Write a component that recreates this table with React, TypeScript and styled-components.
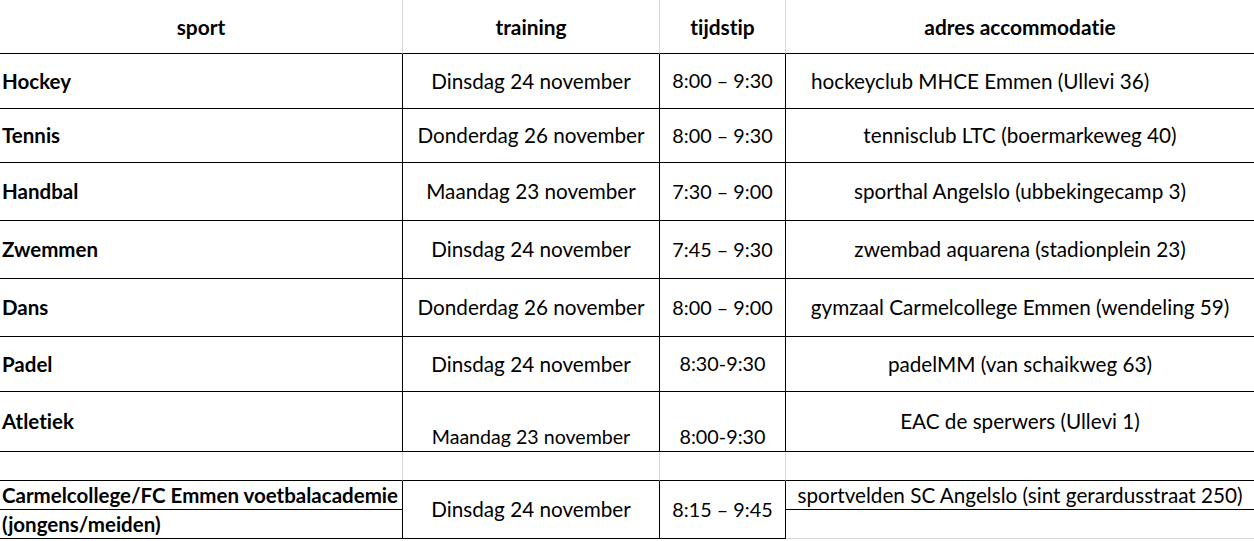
import React from "react";
import styled, { createGlobalStyle } from "styled-components";

const Global = createGlobalStyle`
  html, body { margin: 0; padding: 0; background: #ffffff; }
  body {
    font-family: "Lato", "Liberation Sans", sans-serif;
    color: #000;
    font-variant-ligatures: none;
    font-feature-settings: "liga" 0, "clig" 0;
  }
`;

const BLACK = "#000000";
const GRAY = "#d9d9d9";

const Sheet = styled.div`
  display: grid;
  grid-template-columns: 403px 257px 126px 468px;
  grid-template-rows: 54px 55px 54px 58px 58px 58px 55px 60px 29px 29px 29px;
  width: 1254px;
`;

type Line = "black" | "gray" | "none";

const Cell = styled.div<{
  $right?: Line;
  $bottom?: Line;
  $align?: "left" | "center";
  $valign?: "center" | "end";
  $bold?: boolean;
  $size?: number;
  $padLeft?: number;
  $padBottom?: number;
  $span?: number;
}>`
  box-sizing: border-box;
  display: flex;
  align-items: ${(p) => (p.$valign === "end" ? "flex-end" : "center")};
  justify-content: ${(p) => (p.$align === "left" ? "flex-start" : "center")};
  padding-left: ${(p) => p.$padLeft ?? 0}px;
  padding-bottom: ${(p) => p.$padBottom ?? 0}px;
  border-right: ${(p) =>
    p.$right === "none" ? "none" : `1px solid ${p.$right === "gray" ? GRAY : BLACK}`};
  border-bottom: ${(p) =>
    p.$bottom === "none" ? "none" : `1px solid ${p.$bottom === "gray" ? GRAY : BLACK}`};
  grid-row: ${(p) => (p.$span ? `span ${p.$span}` : "auto")};
  font-weight: ${(p) => (p.$bold ? 700 : 400)};
  font-size: ${(p) => p.$size ?? 20.7}px;
  line-height: 1.2;
  white-space: nowrap;
  overflow: hidden;
  font-variant-ligatures: none;
`;

const HeadCell = styled(Cell).attrs({ $bold: true, $size: 20.9 })``;

type Row = {
  sport: string;
  date: string;
  time: string;
  addr: string;
  addrLeft?: boolean;
  bottomDate?: boolean;
};

const rows: Row[] = [
  { sport: "Hockey", date: "Dinsdag 24 november", time: "8:00 – 9:30", addr: "hockeyclub MHCE Emmen (Ullevi 36)", addrLeft: true },
  { sport: "Tennis", date: "Donderdag 26 november", time: "8:00 – 9:30", addr: "tennisclub LTC (boermarkeweg 40)" },
  { sport: "Handbal", date: "Maandag 23 november", time: "7:30 – 9:00", addr: "sporthal Angelslo (ubbekingecamp 3)" },
  { sport: "Zwemmen", date: "Dinsdag 24 november", time: "7:45 – 9:30", addr: "zwembad aquarena (stadionplein 23)" },
  { sport: "Dans", date: "Donderdag 26 november", time: "8:00 – 9:00", addr: "gymzaal Carmelcollege Emmen (wendeling 59)" },
  { sport: "Padel", date: "Dinsdag 24 november", time: "8:30-9:30", addr: "padelMM (van schaikweg 63)" },
  { sport: "Atletiek", date: "Maandag 23 november", time: "8:00-9:30", addr: "EAC de sperwers (Ullevi 1)", bottomDate: true },
];

const SPORT_SIZE = 20.5;

export default function App() {
  return (
    <>
      <Global />
      <Sheet>
        <HeadCell $right="gray">sport</HeadCell>
        <HeadCell $right="gray">training</HeadCell>
        <HeadCell $right="gray">tijdstip</HeadCell>
        <HeadCell $right="none">adres accommodatie</HeadCell>

        {rows.map((r) => (
          <React.Fragment key={r.sport}>
            <Cell $bold $align="left" $padLeft={2} $size={SPORT_SIZE}>
              {r.sport}
            </Cell>
            <Cell
              $valign={r.bottomDate ? "end" : "center"}
              $padBottom={r.bottomDate ? 3 : 0}
              $size={r.bottomDate ? 19.6 : 20.7}
            >
              {r.date}
            </Cell>
            <Cell
              $valign={r.bottomDate ? "end" : "center"}
              $padBottom={r.bottomDate ? 2 : 0}
              $size={19.8}
            >
              {r.time}
            </Cell>
            <Cell
              $right="none"
              $align={r.addrLeft ? "left" : "center"}
              $padLeft={r.addrLeft ? 25 : 0}
            >
              {r.addr}
            </Cell>
          </React.Fragment>
        ))}

        <Cell $right="gray" />
        <Cell $right="gray" />
        <Cell $right="gray" />
        <Cell $right="none" />

        <Cell $bold $align="left" $padLeft={2} $size={SPORT_SIZE}>
          Carmelcollege/FC Emmen voetbalacademie
        </Cell>
        <Cell $span={2}>Dinsdag 24 november</Cell>
        <Cell $span={2} $size={19.8}>
          8:15 – 9:45
        </Cell>
        <Cell $right="none">sportvelden SC Angelslo (sint gerardusstraat 250)</Cell>
        <Cell $bold $align="left" $padLeft={2} $size={SPORT_SIZE}>
          (jongens/meiden)
        </Cell>
        <Cell $right="none" $bottom="gray" />
      </Sheet>
    </>
  );
}
